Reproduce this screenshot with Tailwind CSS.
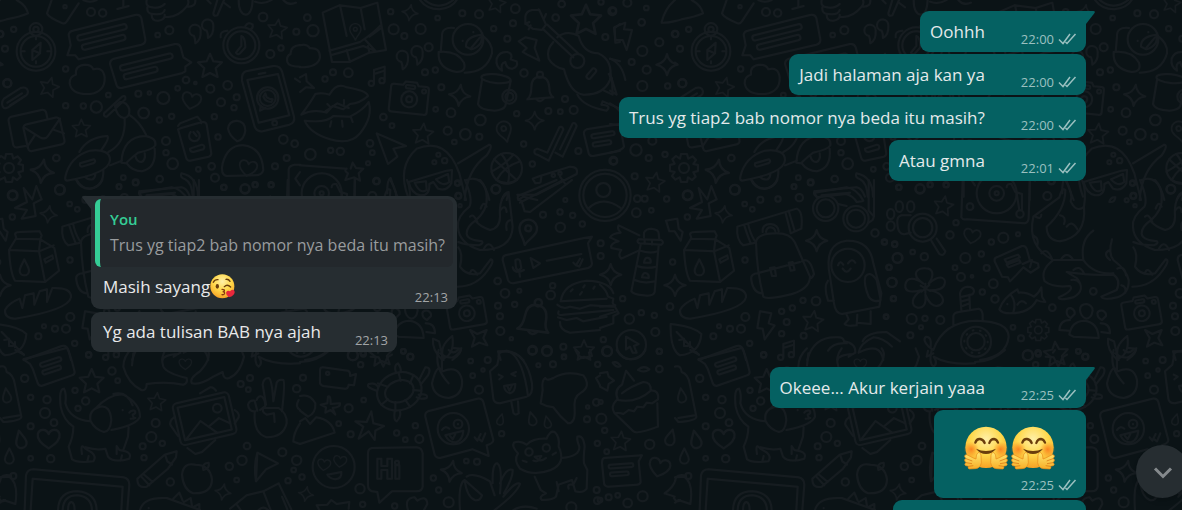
<!DOCTYPE html>
<html lang="id">
<head>
<meta charset="utf-8">
<meta name="viewport" content="width=device-width, initial-scale=1">
<title>Chat</title>
<script src="https://cdn.jsdelivr.net/npm/@tailwindcss/browser@4"></script>
</head>
<body class="bg-[#0b1316] font-['Open_Sans','Noto_Sans',sans-serif]">
<main class="relative isolate h-screen overflow-hidden">

<!-- Wallpaper: a doodle tile that repeats every 675px -->
<svg class="absolute inset-0 -z-10 size-full" aria-hidden="true">
<defs>
<path id="spark" d="M0-32Q5-6 32 0Q6 5 0 32Q-5 6-32 0Q-6-5 0-32Z"/>
<path id="star" d="M0-35L10-12L36-9L17 9L23 35L0 23L-23 35L-17 9L-36-9L-10-12Z"/>
<path id="heart" d="M0 28C-22 14-34 2-31-13C-27-29-6-29 0-13C6-29 27-29 31-13C34 2 22 14 0 28Z"/>
<path id="drop" d="M0-24C6-10 14 0 14 10A14 14 0 0 1-14 10C-14 0-6-10 0-24Z"/>
<path id="quote" d="M14 30Q32 20 30-8A17 17 0 1 0 10 8Q14 16 14 30Z"/>
<g id="bell"><path d="M-38 30Q-26 20-26-5Q-26-38 0-38Q26-38 28-5Q28 16 40 24Z"/><circle cy="-44" r="9"/><path d="M-10 30Q0 42 12 28"/></g>
<g id="camera"><path d="M-50-38L-22-38L-16-48L18-48L24-38L48-38Q56-38 56-28L56 38Q56 46 46 46L-48 46Q-58 46-58 38L-58-30Q-58-38-50-38Z"/><circle r="24" cy="4"/><circle r="9" cy="4"/><circle cx="42" cy="-24" r="6"/><rect x="-14" y="-38" width="28" height="10" rx="4"/></g>
<g id="gear"><path d="M-9-42H9L13-28L26-35L36-24L28-12L42-9V9L28 13L35 26L24 36L12 28L9 42H-9L-13 28L-26 35L-36 24L-28 12L-42 9V-9L-28-13L-35-26L-24-36L-12-28Z"/><circle r="15"/></g>
<g id="note"><path d="M-10 20V-18L22-28V10M-10-6L22-16"/><circle cx="-18" cy="22" r="8"/><circle cx="14" cy="14" r="8"/></g>
<g id="pin"><path d="M0 34C-8 14-24 6-24-12A24 24 0 0 1 24-12C24 6 8 14 0 34Z"/><circle cy="-12" r="8"/></g>

<g id="doodles" fill="none" stroke="#161c20" stroke-width="6" stroke-linejoin="round" stroke-linecap="round">
<g transform="scale(.33333)" data-dots="195,20,5 273,36,12 308,39,11 41,88,8 15,146,9 0,102,10 22,250,12 473,105,7 508,91,12 197,207,8 197,317,8 250,318,8 289,321,17 325,285,7 415,281,9 448,279,5 490,294,18 431,339,16 478,360,8 515,349,8 533,265,7 558,240,10 586,249,4 631,266,12 683,256,13 710,292,9 663,307,12 702,323,8 643,350,8 654,411,8 498,423,12 498,458,8 518,491,16 479,537,10 407,547,9 370,533,7 357,560,7 169,474,10 180,569,15 38,586,15 595,508,7 635,499,10 645,533,12 672,562,8 735,567,14 766,554,7 814,555,7 825,499,9 860,474,9 850,418,13 884,431,10 789,51,13 811,162,12 843,144,8 889,95,9">
<path d="M-40 66Q-30 25 0 0M50 0Q78 15 84 40Q60 50 20 58Q-20 70-40 68"/>
<path d="M155 0L141 40Q145 52 188 70Q196 72 202 62L236 10M250 0Q270 10 290 0M370-5V20M352 27L386 18"/>
<path d="M440 0Q436 20 455 22Q480 26 494 12M442 22Q440 42 460 42Q490 46 494 30M455 44Q455 64 475 62Q496 58 494 44M494 50Q530 56 560 20Q568 10 564 0M564 20Q588 20 586 0M622 0L632 10M652 0L640 40Q640 50 652 46L672 0M672 8L690 22M716 0Q716 42 738 44Q756 42 758 0M765 5Q790 15 815 0M850 0Q865 18 888 8"/>
<circle cx="108" cy="154" r="58"/><circle cx="108" cy="154" r="46"/><circle cx="108" cy="88" r="19"/><circle cx="108" cy="88" r="8"/><path d="M122 128L97 150V180L120 160ZM97 150L120 160M108 112V118M108 190V184M66 154H74M150 154H142"/>
<path d="M218 92L405 45Q420 42 424 54L436 118Q438 130 424 134L236 178L226 166L202 166L212 136L206 104Q208 94 218 92Z"/>
<rect x="230" y="89" width="152" height="16" rx="8" transform="rotate(-14 306 97)"/><rect x="244" y="119" width="134" height="16" rx="8" transform="rotate(-14 311 127)"/>
<path d="M342 176L525 132Q538 130 542 142L550 172L574 187L556 200V214L545 220L365 264Q354 266 350 256L330 192Q330 180 342 176Z"/>
<rect x="358" y="178" width="162" height="16" rx="8" transform="rotate(-14 439 186)"/><rect x="370" y="211" width="104" height="16" rx="8" transform="rotate(-14 422 219)"/>
<path d="M228 224Q224 196 255 194Q275 194 280 208Q310 200 314 232Q316 275 270 282Q215 285 209 250Q208 230 228 224Z"/>
<use href="#quote" x="572" y="100"/><use href="#quote" x="610" y="84"/>
<circle cx="724" cy="136" r="54"/><circle cx="724" cy="136" r="42"/><path d="M724 108V138L708 158Q714 168 722 158L736 142Q736 112 724 108ZM662 112Q658 94 682 92M736 78Q745 64 758 74Q760 84 752 88"/>
<use href="#star" transform="translate(832 86) rotate(8) scale(.8)"/>
<use href="#star" x="630" y="196"/><use href="#star" transform="translate(148 260) rotate(15) scale(.8)"/><use href="#star" transform="translate(244 384) scale(.75)"/>
<path d="M900 135Q870 138 872 162Q858 168 862 186Q866 200 900 200M885 236L900 246M0 188L6 192"/>
<use href="#heart" transform="translate(574 302) rotate(12) scale(.9)"/>
<path d="M12 296L62 264Q80 258 84 274Q84 284 76 288L24 322Q8 330 6 312Q6 302 12 296M22 308L66 280M30 316L74 288"/>
<path d="M142 354L138 336Q134 328 124 330L34 350Q24 354 26 364L40 436Q44 444 54 442L76 438"/>
<rect x="76" y="362" width="112" height="82" rx="10" transform="rotate(-13 132 403)"/><path d="M72 382L120 412Q136 420 144 408L180 356M82 440L106 404M192 400L158 388"/>
<use href="#gear" x="27" y="504"/><use href="#spark" transform="translate(127 514) rotate(8) scale(1.1)"/>
<path d="M312 340L366 290Q378 284 376 298L320 350Q310 350 312 340M345 318Q350 350 372 354Q390 352 388 328Q380 304 360 306ZM374 356Q378 430 325 456M390 346Q420 366 438 404M238 456Q262 412 322 408Q330 414 304 450M196 530Q210 470 270 452Q330 446 330 480Q328 520 200 542Q194 540 196 530ZM330 496L366 482M364 488Q368 410 436 408Q470 414 466 436Q460 448 414 458Q386 480 378 490ZM228 538Q238 566 270 566Q312 560 310 510M256 530Q262 540 278 538Q286 532 286 522M380 490Q398 514 426 514Q470 504 464 446M406 468Q410 486 424 486Q438 480 434 460M240 490L282 478Q290 484 280 490L246 500Q238 500 240 490"/>
<path d="M534 378L540 370L592 350L602 362L604 370M544 384L606 366Q618 364 620 374L634 460Q634 468 626 470L570 482Q560 482 558 472L534 388ZM570 446L606 434Q618 438 610 448L580 456Q570 456 570 446M572 396A16 16 0 1 0 592 394M580 396L590 408"/>
<path d="M738 214L820 198Q840 196 846 214L882 350Q886 368 868 374L788 394Q770 396 764 380L726 242Q724 218 738 214ZM742 240L834 222L868 346L776 368ZM776 222L796 218"/><circle cx="803" cy="294" r="32"/><path d="M782 318L780 332L796 324M790 290Q796 306 814 306L818 298L808 296L800 292L796 280Z"/><circle cx="824" cy="369" r="7"/><circle cx="803" cy="294" r="24"/>
<path d="M710 362Q736 364 736 392Q732 420 712 424Q688 408 684 386Q686 364 710 362M680 528Q660 524 668 490Q684 434 730 436Q786 442 790 510Q786 526 765 526L680 528"/><use href="#heart" transform="translate(744 504) rotate(10) scale(.85)"/>
<path d="M418 574L545 562Q560 564 570 590M440 586L525 578M544 520Q594 530 594 590M544 520Q538 532 556 538Q576 548 578 590M418 574Q414 584 426 590M866 590V508Q868 496 884 494H900M900 516L886 536L900 556"/>
</g>

<g transform="translate(300 0) scale(.33333)" data-dots="22,53,10 39,92,17 272,35,8 281,88,15 313,108,9 362,87,15 386,142,12 413,54,7 487,40,9 537,43,12 581,86,8 646,26,13 639,70,9 622,116,9 785,12,10 767,53,10 903,6,8 937,34,12 916,111,9 99,217,9 75,237,8 145,218,13 375,217,9 406,210,8 424,262,9 407,328,7 453,338,13 250,351,10 276,377,7 443,392,12 463,426,7 496,403,16 538,410,9 541,360,16 650,341,8 745,333,9 781,335,7 821,330,12 795,297,9 672,219,11 671,432,8 835,453,9 697,492,8 940,482,12 31,463,16 92,451,8 121,454,11 210,430,10 217,458,7 204,490,6 229,543,10 415,464,6 434,482,8 403,487,6 587,568,13 473,549,8">
<path d="M68 38L118 16L182 24L232 8L258 150L208 158L148 186L96 186ZM120 16L140 108M182 24L194 88M140 150L150 186M204 138L208 156M88 152L180 126Q220 100 244 74M92 166L190 138L224 152M196 120L226 152M208 110L244 84"/><use href="#pin" transform="translate(166 96) scale(.7)"/>
<use href="#spark" transform="translate(330 38) rotate(8) scale(.75)"/>
<path d="M360 0Q380 28 418 28Q456 24 470 0M374 0Q415 34 460 0M0 136Q20 130 30 145Q60 142 60 172Q55 202 0 202"/>
<use href="#quote" x="294" y="178"/><use href="#quote" x="338" y="164"/><use href="#note" x="232" y="228"/>
<circle cx="504" cy="118" r="46"/><path d="M462 84Q424 80 426 110L422 156M546 106Q580 130 576 160Q560 218 494 218M416 156Q412 206 470 216Q500 216 492 188Q470 150 416 156M498 140Q496 110 544 104Q552 136 514 148ZM512 146L540 112"/><path d="M488 122V123M520 96V97"/>
<path d="M590 176Q598 154 622 156Q640 160 632 178L650 184Q656 200 638 206Q620 208 616 186Q600 190 606 212Q586 200 590 176"/>
<use href="#star" transform="translate(590 8) rotate(12) scale(.75)"/>
<path d="M656 124L676 112L710 120L704 144L718 182L682 164L668 156L680 144Z"/>
<path d="M676 50Q678 34 696 30L718 30L738 74L726 90L698 86L676 70ZM716 28L724 42M738 42L732 56M686 88L692 76M676 72L688 66M728 86L820 172M742 74L834 160M760 126Q738 150 746 176Q760 200 792 208Q810 280 850 284Q910 286 930 240Q940 180 895 160Q850 160 836 108Q800 88 772 112"/><circle cx="832" cy="183" r="21"/><rect x="856" y="214" width="36" height="14" rx="6" transform="rotate(-50 874 221)"/><path d="M930 176L960 184M926 222L936 236L938 284L912 272M832 284Q850 320 920 332Q936 316 904 314L908 304L960 326"/>
<use href="#star" transform="translate(858 58) scale(1.25)"/><path d="M960 72L944 84L946 128L960 126"/>
<path d="M0 232L18 222L20 244L42 264L18 262L0 276"/>
<path d="M4 344Q30 310 46 282Q66 276 88 284Q110 246 140 262Q200 272 204 288Q180 310 150 312L130 328L98 318L80 338Q40 326 4 344M76 334L112 310L146 324M14 362Q80 370 100 348L150 350Q190 330 206 306Q220 350 180 400Q150 436 90 418Q30 400 14 362M90 380L94 364M128 380L126 362M158 366L152 350M82 312L90 320M132 300V312"/>
<use href="#camera" transform="translate(328 294) rotate(6)"/><use href="#spark" transform="translate(479 286) rotate(6)"/>
<ellipse cx="588" cy="236" rx="44" ry="13" transform="rotate(6 588 236)"/><path d="M546 240L534 312Q540 330 584 332Q610 330 616 318L632 244"/><circle cx="628" cy="290" r="21"/><circle cx="628" cy="290" r="12"/>
<use href="#bell" x="720" y="268"/><use href="#spark" transform="translate(704 362) scale(.85)"/><use href="#pin" transform="translate(614 396) rotate(-15) scale(.9)"/><use href="#star" transform="translate(369 400) rotate(5) scale(.85)"/>
<path d="M230 400L318 438L280 446L292 470L264 492Z"/>
<path d="M704 450Q700 462 712 464L746 482L790 388Q786 376 778 382L742 458L712 446ZM766 458L788 470L830 378Q826 366 818 370L780 448"/>
<path d="M960 372L860 388Q850 392 852 402L866 460Q870 470 880 468L960 452"/><rect x="874" y="398" width="70" height="12" rx="6" transform="rotate(-9 909 404)"/><rect x="878" y="424" width="56" height="12" rx="6" transform="rotate(-9 906 430)"/>
<path d="M324 590Q290 500 350 446Q440 410 478 520L498 600M474 490L568 434Q580 436 560 466Q500 510 494 600M500 540Q550 520 568 600M326 546L440 512L456 510L454 550Q440 576 414 566L400 546L388 552Q390 588 360 586Q334 580 326 546M344 548L378 544L380 570Q360 584 344 548M408 538L444 522L448 546Q430 562 408 538"/>
<circle cx="620" cy="505" r="46"/><path d="M582 478L650 540M604 462Q636 500 624 550M660 484Q610 500 590 540M575 515Q620 490 640 464"/>
<path d="M652 584L710 584L830 522Q836 500 810 500L720 528L698 536L706 550L720 548M780 530L796 552M655 600L670 590L712 600M724 530L722 546"/><circle cx="760" cy="526" r="5"/><circle cx="780" cy="520" r="5"/>
<path d="M0 496L140 506M164 536V600M140 506Q130 512 144 520L136 540L162 532L180 542L176 520L190 506L168 504L158 488L152 506M262 580Q260 540 272 534Q280 560 296 600M605 600Q612 578 626 576L620 600"/>
<circle cx="915" cy="586" r="77"/><circle cx="915" cy="586" r="65"/><circle cx="910" cy="570" r="21"/><path d="M864 626Q908 584 962 624"/>
</g>

<g transform="translate(610 0) scale(.33333)" data-dots="52,8,12 9,32,9 109,24,7 95,67,10 97,153,15 148,127,12 196,102,9 65,186,9 110,209,12 97,258,15 173,258,8 217,250,12 127,422,12 78,450,17 116,474,9 11,483,10 165,463,8 74,529,9 82,596,10">
<path d="M12 82L46 68L42 88L66 90L50 150L38 120L16 120Z"/><use href="#spark" x="171" y="194"/>
<path d="M0 176Q36 190 46 240M0 220L20 284L0 272M0 310Q20 320 34 340M0 372L30 376L42 440Q38 452 0 458"/><use href="#star" transform="translate(135 545) rotate(10) scale(.8)"/>
</g>

<g transform="translate(600 180) scale(.33333)" data-dots="134,56,9 200,57,8 109,98,13 154,91,7 263,46,13 262,111,8 404,29,14 434,72,7 457,88,7 481,59,9 534,57,8 598,53,11 582,20,7 632,8,8 2,190,9 2,228,9 218,246,8 435,240,8 210,380,10 68,356,8 88,417,14 124,398,8 163,406,8 166,456,12 178,514,8 10,479,8 21,514,15 340,469,9 357,439,6 390,446,9 423,446,12 436,411,12 449,490,8 491,524,8 545,394,8 577,384,8 560,426,9 545,461,8 609,361,8 648,363,13 611,467,9 825,159,11 853,186,8 884,192,8 892,234,14 867,262,8 876,307,14 880,356,8 859,410,6">
<path d="M296 24L322 58L334 18L350 58L326 70L332 108L290 116L306 90L270 84L306 66Z"/>
<use href="#spark" transform="translate(371 103) rotate(8) scale(.8)"/><path d="M455 0Q470 26 494 26Q520 24 532 0"/>
<path d="M132 172V158Q138 146 154 146Q176 148 176 160L178 178M116 178L184 180Q194 188 184 194L118 190Q108 184 116 178M134 178V192M156 180V194M122 194L94 334Q100 344 130 346Q160 350 164 336L176 196M120 212Q150 222 172 214M110 258Q140 268 168 260M104 300Q130 312 166 304M132 248Q134 230 146 234Q154 238 152 248ZM126 292Q128 276 140 280Q148 284 146 294Z"/>
<path d="M118 166L56 136Q50 146 62 158Q36 160 30 172L56 184Q30 190 34 204L64 210Q52 226 64 236L116 212"/>
<path d="M198 122L232 116L236 146L248 156L242 182L224 154L208 154Z"/>
<use href="#spark" transform="translate(32 284)"/><use href="#spark" x="225" y="316"/><use href="#spark" x="650" y="182"/>
<path d="M252 210L274 174L270 162Q272 156 284 156L344 154L350 166L346 178L388 204L402 272L360 306L270 302Q256 280 252 210L342 214L360 304M274 176L346 178L342 214L386 196M358 238L382 226L384 236L362 248Z"/><use href="#drop" x="298" y="262"/>
<path d="M240 390Q250 370 284 356L292 384L300 346L326 340L328 374L344 334L366 328L366 366L382 324Q440 322 438 352Q430 390 270 416Q238 414 240 390"/>
<path d="M412 140L590 86Q610 94 604 146L572 160M412 140Q408 180 430 196L466 188M432 134Q440 160 452 190M444 130Q450 160 464 182M556 96L572 158M566 92L584 152M468 186Q472 160 530 160Q570 160 584 186L630 290Q630 330 560 346Q500 360 490 350Q470 270 468 186M472 280L600 246M488 156Q486 132 512 132Q534 134 536 154M498 156Q500 142 512 142Q524 144 526 154M606 244Q630 230 642 282Q636 296 630 294M476 280Q450 280 454 300Q460 340 488 340M510 264L524 262L528 288L516 288ZM566 248L578 246L584 270L572 272Z"/>
<circle cx="677" cy="85" r="38"/><circle cx="677" cy="85" r="27"/><circle cx="768" cy="116" r="38"/><circle cx="768" cy="116" r="27"/><path d="M644 38L740 22Q770 26 790 62M644 38L650 52L738 42Q760 48 770 66L786 64M714 72L740 78M806 0V92L822 110L818 120L806 128M822 110V0"/>
<circle cx="744" cy="256" r="50"/><path d="M690 290Q670 190 740 182Q810 180 820 250L844 340L838 380L726 402Q706 400 702 370ZM714 256Q720 238 730 254M744 250Q756 232 766 248M728 266Q740 284 752 266M684 302Q670 320 684 362L702 362M796 290Q810 270 830 300L842 360Q820 370 806 350Q790 310 796 290M740 404L746 418L734 432Q740 440 770 436L772 404M772 428L812 432L812 394"/>
<path d="M212 432Q280 438 304 462Q300 520 240 526Q210 510 212 432M230 456L296 524M252 476V494M238 480L250 478M270 486V502M252 498H264"/>
<circle cx="94" cy="494" r="44"/><path d="M78 470L116 492L102 498L110 518L98 518L90 500L78 508Z"/>
<path d="M480 394L514 400L506 430L524 436L494 478L488 446L472 444Z"/><use href="#star" transform="translate(639 422) rotate(8) scale(.85)"/><use href="#note" x="560" y="510"/>
<path d="M0 314Q20 330 24 350L40 356L38 368L56 400L40 408V430L0 444M0 380L46 376M0 410L50 394"/>
<path d="M296 540L410 498Q424 494 430 510L438 540"/>
<path d="M622 540Q640 470 710 472Q730 470 732 484Q768 490 766 518L746 530M684 512Q700 486 740 490M788 484Q800 456 860 456L900 484M776 518Q780 490 820 472Q850 474 876 500M776 518Q840 484 850 540M712 540Q716 524 760 522"/>
</g>

<g transform="translate(880 180) scale(.33333)" data-dots="56,22,8 120,26,13 150,14,8 198,14,8 228,128,8 210,165,11 270,80,10 370,173,15 414,163,6 334,186,8 304,222,8 14,186,7 44,193,8 53,234,15 98,216,7 133,230,11 27,262,8 256,234,15 225,263,7 243,291,12 276,289,4 320,264,9 340,311,13 36,307,14 307,336,8 345,357,11 41,356,7 18,410,7 95,417,15 135,415,8 181,420,12 123,442,6 91,466,9 399,442,7 423,475,9 443,526,15 474,518,8 517,383,10 502,48,12 515,4,9 640,334,10 757,10,7 760,47,9 740,61,6 765,77,5 595,514,7 616,530,9">
<path d="M248 0L244 112Q248 120 260 118L434 130Q446 128 446 112L450 0M380 22Q380 10 394 12L406 36L426 42V90M410 40L418 90"/><circle cx="350" cy="40" r="22"/><circle cx="350" cy="40" r="6"/><circle cx="350" cy="40" r="60"/><circle cx="420" cy="102" r="11"/>
<use href="#star" transform="translate(191 76) rotate(10) scale(.8)"/>
<circle cx="128" cy="143" r="42"/><circle cx="128" cy="143" r="29"/><path d="M154 182L178 222Q192 230 196 214L170 176M92 106H64Q50 110 52 130Q54 166 76 162L92 158"/><ellipse cx="32" cy="102" rx="11" ry="15"/><ellipse cx="58" cy="80" rx="11" ry="16"/><ellipse cx="92" cy="80" rx="11" ry="16"/><ellipse cx="32" cy="138" rx="12" ry="14"/>
<use href="#heart" transform="translate(276 168) rotate(10) scale(.8)"/>
<path d="M350 232L426 198Q436 196 440 206L450 242L474 250L476 262L452 278L430 262L410 284L390 304L384 292L366 290L344 244Q342 234 350 232M428 252L456 240L450 262M374 238L414 224L420 232L380 248ZM380 254L418 240L422 248L386 262Z"/>
<g transform="translate(136 325)"><path d="M-6-14C-50-45-20-62 0-60C24-60 28-40 10-14C50-48 62-26 58-14C56 4 34 6 14 6C56 14 60 40 44 50C24 60 8 40 0 18C4 50-8 60-22 58C-46 52-42 26-12 6C-44 14-62 10-60-10C-56-36-30-32-6-14ZM-14-8L14 8M-12 10L12-10M0-14V14"/></g>
<path d="M220 436V408Q222 398 236 396L296 386Q306 388 308 404V424M244 390L240 340Q244 322 262 320Q282 320 282 334Q280 346 268 344L270 386M246 350L266 346M246 364L268 358M248 378L268 370M160 510Q190 424 290 422Q386 424 386 470Q380 530 300 540M160 510L146 500Q126 480 138 470Q156 470 152 500M160 520L140 530L144 512"/><circle cx="288" cy="485" r="45"/><circle cx="288" cy="485" r="26"/><circle cx="288" cy="485" r="35" stroke-dasharray="2 20"/>
<path d="M358 388Q370 352 412 328L416 338Q440 336 462 350Q476 340 484 322L486 350L496 366Q480 366 470 360Q450 400 390 400Q366 400 358 388M392 344Q410 366 400 398M412 374Q424 356 438 370M382 372V373"/>
<use href="#gear" transform="translate(475 450) scale(.75)"/><use href="#star" transform="translate(528 520) rotate(-5)"/>
<path d="M556 0Q580 40 572 64Q590 100 612 80Q620 30 606 0M556 30Q546 20 538 52Q500 80 460 110Q440 200 520 240H610M556 30Q556 90 500 140Q500 180 540 184Q620 170 612 80M540 106Q560 110 552 132M560 140Q576 118 592 148M466 110Q484 120 484 104M460 166Q478 176 472 196M484 220Q500 200 516 236M542 240Q560 210 580 240M640 152Q600 180 610 240Q640 284 700 280M520 240Q480 270 494 304Q520 324 570 318Q584 330 536 352Q536 364 580 352Q620 330 590 294L560 276M560 276Q640 288 700 284Q724 300 710 330L664 350Q670 362 712 352Q748 340 746 300Q740 270 700 240Q684 220 696 178M580 270Q600 254 612 280M690 210Q666 220 690 240M712 266Q734 256 738 286M724 316Q740 320 736 338M574 300Q590 296 600 310"/>
<path d="M688 66Q692 50 706 52Q704 68 688 66"/>
<path d="M600 390Q600 372 620 372Q638 376 638 392Q634 416 618 416Q602 410 600 390M560 396Q560 384 572 384Q586 390 584 402L572 414Q560 408 560 396M652 400Q654 390 668 392Q680 398 678 408L666 420Q652 414 652 400M568 464Q574 424 612 422Q654 426 656 474L580 470ZM538 450Q540 420 570 420M538 450L566 452M662 430Q690 430 690 460L664 456"/>
<path d="M712 540Q680 510 684 476L702 484M702 484Q710 520 716 540M742 468Q700 500 716 536Q750 520 742 468M746 504L768 506Q770 520 742 540"/>
</g>

<g transform="translate(280 180) scale(.33333)" data-dots="535,48,8 648,27,13 789,104,9 840,96,8 841,142,14 856,60,6 878,106,8 907,132,8 653,303,10 675,340,13 718,332,6 818,317,8 812,345,13 654,377,9 704,373,8 660,409,9 661,453,12 694,476,5 757,512,12 801,512,15 850,500,9 852,530,7">
<path d="M555 0Q580 60 568 80Q530 110 534 140Q536 190 600 210Q696 210 698 140Q690 70 686 40Q656 50 660 110Q660 144 630 150Q600 140 586 122Q624 90 620 50Q620 20 600 0M586 122Q560 140 560 160Q560 180 606 184Q612 190 596 196Q560 196 535 186M570 110Q580 98 592 126M602 86Q610 60 620 80M660 92Q676 70 680 96M696 120Q674 120 680 150M610 210Q626 176 642 210M535 202Q550 220 540 260Q560 290 600 280L632 238Q646 240 624 270Q590 320 532 320M570 280Q576 258 592 284"/>
<path d="M650 0Q680 18 710 0M714 48L830 0M714 48Q710 60 724 62L734 94L750 96L876 0M720 68L850 0"/>
<use href="#pin" transform="translate(742 158) rotate(12) scale(1.1)"/>
<path d="M676 226L912 174L936 170L924 190L936 250Q936 260 924 264L700 310Q688 310 684 300L668 240Q668 228 676 226M706 240Q716 234 720 242L724 264Q714 276 708 264ZM698 262Q704 284 732 270M718 278L720 290M752 234L780 250L760 264ZM800 242L904 222M880 248L888 256L900 236M890 256L898 260L908 238"/>
<use href="#camera" transform="translate(560 396) rotate(-10) scale(.98)"/><use href="#bell" transform="translate(764 420) rotate(12) scale(1.2)"/>
<path d="M570 450L592 462L620 450L610 474L622 496L598 488L576 500L584 474Z"/>
<path d="M842 364Q850 310 920 302Q990 304 1000 340M842 364L980 356M832 374Q850 390 870 380L900 386L930 376L1000 380M836 394Q830 408 850 404L1000 390M834 412L860 420L890 414L910 424L980 410M840 426Q838 450 870 458L960 450M872 334L878 328M910 322L914 316M900 344L906 336M940 326L944 320"/>
<use href="#star" transform="translate(912 510) scale(.85)"/><path d="M654 514Q710 512 730 540M654 514L662 540"/>
</g>

<g transform="translate(0 350) scale(.33333)" data-dots="266,15,8 74,85,11 92,142,8 141,149,11 135,189,15 162,218,10 92,229,9 92,325,7 152,326,11 225,121,8 257,153,11 234,175,8 336,63,11 353,92,7 467,219,12 454,261,15 487,280,8 428,289,9 432,323,8 511,396,11 722,102,9 750,84,9 745,119,7 741,288,10 726,331,14 688,349,11 710,390,7 847,307,12 890,116,11 890,331,14 881,360,7 864,392,8">
<path d="M46 0L72 14M0 50Q18 44 20 66Q40 74 44 100L64 200Q64 212 10 216L0 204M10 204L60 196"/><use href="#drop" transform="translate(20 136) rotate(-8) scale(.9)"/>
<path d="M70 28L200 -6Q208 0 224 66Q224 74 216 76L124 108Q114 106 112 96L98 56L90 42Z"/><rect x="119" y="30" width="66" height="12" rx="6" transform="rotate(-18 152 36)"/><rect x="126" y="54" width="58" height="12" rx="6" transform="rotate(-18 155 60)"/>
<use href="#star" transform="translate(275 92)"/><use href="#star" transform="translate(470 154) rotate(5) scale(.75)"/>
<path d="M396 -5Q370 20 370 50Q384 100 424 120Q440 124 440 102Q500 94 550 104Q564 100 560 84Q500 70 490 50Q480 20 500-5M396 46L400 10M620 -5Q640 20 600 64Q566 86 576 100Q600 106 640 80L668 66Q670 90 688 84Q720 70 732 20L722-5"/><use href="#heart" transform="translate(556 42) scale(.6)"/>
<path d="M770 0Q760 40 776 50Q790 40 776 20Q820 46 900 40"/>
<path d="M192 116Q176 116 182 170Q190 210 220 230Q220 260 206 290L216 328Q230 340 280 334Q290 320 276 308L256 296Q240 276 246 312M192 116Q200 130 196 160Q210 210 272 214M256 292Q290 302 316 296L324 320Q340 340 388 326Q396 310 376 304L358 300L350 288V312M386 230L384 260L370 300M262 334L266 318M362 332L366 316M272 214Q264 180 300 170Q330 164 334 210Q330 246 312 246Q286 240 272 214M286 176Q330 130 370 134Q420 160 420 200Q410 226 334 240M340 132Q380 120 398 166M388 188Q392 180 404 182Q410 190 398 194L402 206M392 206L406 204M368 180V181"/>
<use href="#heart" transform="translate(146 266) scale(1.05)"/><use href="#drop" transform="translate(62 268) rotate(-12) scale(1.1)"/><use href="#drop" transform="translate(28 318) scale(.95)"/>
<g transform="rotate(-13 614 206)"><rect x="528" y="142" width="172" height="128" rx="14"/><rect x="542" y="156" width="144" height="100"/><circle cx="658" cy="184" r="13"/><path d="M546 254L600 210L640 254M620 232L656 214L684 236"/></g><path d="M600 130L630 112Q640 110 648 122M524 200Q506 214 512 226L534 258M704 180Q720 190 716 202L704 220M562 294L586 312L606 306L646 270"/>
<path d="M798 164L788 104Q790 84 806 84Q816 88 820 154L830 98Q836 86 850 90Q856 96 846 184M766 184Q746 186 744 164Q748 150 764 152L772 182M770 150Q774 136 786 140Q796 150 796 168L780 180M790 174Q784 186 800 194L822 190L824 216M790 174L836 174Q862 190 860 220Q850 262 800 262Q760 250 764 188"/>
<path d="M772 308L834 340L798 358L768 394ZM772 308Q760 350 768 394"/>
<path d="M412 386L494 314L530 304L528 322L504 356L440 410Q412 416 412 386M430 372L458 396M424 380L448 406M496 316L502 334L516 344"/>
<path d="M586 344Q550 336 546 374Q550 420 580 430Q636 432 636 388Q630 344 586 344M610 360Q604 340 626 338Q630 356 610 360"/>
<use href="#spark" transform="translate(669 426) rotate(10) scale(.75)"/>
<path d="M74 480L78 376Q82 358 100 358L370 382Q388 386 388 404L382 480M92 480L98 386L368 410L364 480"/><path d="M174 480Q176 424 232 424Q288 428 290 480M188 480Q190 436 232 436Q274 440 276 480M204 480Q204 458 214 456Q224 458 224 480"/>
<path d="M0 382L28 380Q56 400 46 462L10 450L0 458"/><circle cx="40" cy="378" r="9"/>
<path d="M420 480Q430 440 500 444L600 480M520 446L538 428L548 452M552 456L572 444L576 468M582 470L598 462V480M446 474V475M690 476L740 436L790 424L836 400L874 478M790 424L812 480M846 440L862 478M776 480Q790 466 804 480M722 480L712 466"/>
<path d="M900 220Q880 250 880 275L900 282M896 150Q884 170 900 180"/>
</g>

<g transform="translate(300 350) scale(.33333)" data-dots="9,83,9 182,44,8 159,16,15 190,12,8 331,20,9 310,4,7 146,175,12 191,150,7 116,221,7 152,253,9 346,227,8 290,249,8 316,269,7 358,267,12 512,33,7 563,30,9 549,60,5 518,77,7 537,119,12 605,251,8 499,333,7 531,335,9 400,384,8 416,420,8 446,457,15 180,416,14 188,463,8 284,468,8 6,381,8 715,46,6 759,43,9 698,0,13 741,4,14 792,22,6 893,43,8 889,157,10 863,171,5 861,208,9 892,280,8 890,420,9 814,472,15 892,452,10">
<path d="M68 52L144 62Q152 66 150 78L168 72L162 106L146 104Q144 118 134 116L70 108Q58 104 60 94L60 62Q60 52 68 52"/><circle cx="83" cy="70" r="5"/>
<path d="M212 20L236 22L250 50L262 22L276 14M240 0L234 8M0 36Q50 36 90 0"/>
<path d="M84 140Q92 134 92 162L120 160Q122 172 98 174L106 194L92 180L76 188L78 172L62 164L82 160Z"/>
<ellipse cx="298" cy="124" rx="68" ry="56" transform="rotate(-20 298 124)"/><ellipse cx="298" cy="124" rx="44" ry="32" transform="rotate(-20 298 124)"/><path d="M288 68Q280 46 294 40Q304 54 302 64M358 88L376 52Q396 52 384 76L362 104M230 122Q196 112 206 102Q226 96 234 110M284 184Q280 210 290 214Q304 200 300 182M356 134Q386 130 380 144Q360 150 350 142M234 100L262 110M296 70L302 92M340 76L330 100M362 122L340 120M244 164L264 148M286 184V156M330 170L316 150"/>
<path d="M416 0Q400 50 446 100M426 0V60Q410 40 396 100Q400 140 446 144Q490 136 486 90Q476 44 428 64M420 10Q440 26 460 22Q480 10 484-5M446 0Q460 14 474 0"/>
<path d="M596 24Q592 4 620 2Q680 10 696 100Q700 134 680 140L600 160Q582 160 580 146L570 64L592 44ZM630 6Q670 30 684 138M634 156L640 188Q646 198 656 190L654 154M596 74L608 80L598 88M648 66L634 72L646 78M612 108L646 102Q646 126 630 130Q614 126 612 108M622 108L628 122L636 106"/>
<path d="M736 84Q740 94 760 84Q800 60 850 76Q876 110 840 130Q820 140 824 180Q826 220 804 220Q780 200 760 172Q740 170 722 160L728 120Q724 90 736 84"/>
<path d="M384 184L532 146Q546 144 550 156L580 270Q580 280 560 286L566 318L518 298L420 324Q408 324 404 314L376 200Q374 188 384 184"/><circle cx="460" cy="236" r="47"/><circle cx="474" cy="222" r="13"/><path d="M426 240Q436 226 448 236M436 256L490 242Q488 270 470 276Q448 280 436 256M450 258L458 268L466 252M524 262L532 272L542 252M538 268L546 274L556 250M474 222V223"/>
<use href="#drop" transform="translate(602 208) rotate(15) scale(.7)"/><use href="#drop" transform="translate(696 206) rotate(-15) scale(.85)"/><use href="#drop" transform="translate(742 216) rotate(-12) scale(.75)"/>
<path d="M214 184L220 220L252 228L226 242L224 270L206 244L176 266L190 230L166 214L200 216Z"/>
<path d="M0 138Q30 130 46 160Q48 190 24 200L0 182M0 214L16 204L30 222L48 202Q96 210 104 248L0 282"/>
<circle cx="101" cy="351" r="63"/><use href="#heart" transform="translate(72 344) rotate(8) scale(.62)"/><use href="#heart" transform="translate(120 334) rotate(8) scale(.62)"/><path d="M82 374L124 366Q126 386 106 388Q88 386 82 374"/>
<path d="M216 294L350 292Q366 294 368 310V410Q366 424 350 424H276L238 458L232 426L216 424Q204 420 204 406V310Q204 296 216 294"/>
<path d="M232 326H244V348H262V326H276V386H262V360H244V386H232ZM286 346H298V386H286Z"/><circle cx="291" cy="338" r="6"/>
<use href="#spark" transform="translate(454 364) rotate(10)"/><use href="#spark" transform="translate(18 432) rotate(10) scale(.7)"/>
<path d="M50 466L82 464L94 450L110 462L148 456L146 476M50 466L58 480M324 480Q312 444 344 442L352 452Q380 434 382 462L372 480"/>
<path d="M480 480Q474 400 494 390L546 436Q540 454 524 450Q500 440 494 390M500 380Q520 366 570 394L584 436M578 400Q576 340 592 340Q608 350 600 430M600 400Q620 350 638 360Q640 380 612 430M610 440Q650 390 660 402Q650 430 584 480"/>
<path d="M642 278Q660 270 680 284Q700 264 740 266Q750 240 764 246Q780 260 776 290Q800 340 752 360Q700 380 660 356Q640 330 654 310Q634 290 642 278M704 320L724 318L716 330ZM700 332Q712 336 716 330Q726 334 738 324M668 332L680 336M758 314L768 308M784 324Q840 320 838 290Q830 270 832 260Q850 254 854 290Q850 320 852 340L862 360L860 416Q850 430 826 424L816 390L776 404L768 440Q760 450 726 450Q714 440 738 430L722 420L704 380M770 396L776 424M806 416Q800 400 820 404L830 384"/><circle cx="687" cy="306" r="11"/><circle cx="739" cy="294" r="11"/><path d="M640 480Q670 462 710 476M826 0L836 18L850 24L876 18L870 0M900 76L888 84L900 106"/>
</g>

<g transform="translate(600 350) scale(.33333)" data-dots="22,4,14 178,57,10 178,4,8 4,206,15 14,241,8 20,305,7 149,283,14 2,156,6 128,439,15 83,459,13 53,436,7 26,442,9 0,450,7">
<path d="M50 0Q66 28 92 28Q126 24 136 0M38 38Q50 32 62 48Q50 56 38 38M114 60Q130 44 148 58Q132 70 114 60"/>
<path d="M0 70L22 66L26 80L42 92L26 102L22 122L0 110"/>
<path d="M66 104L78 62L102 92M66 104Q40 120 54 150Q110 160 152 122Q154 96 130 96Q90 110 66 130M50 150Q30 170 44 190Q60 188 70 192L86 180L102 184L112 170L130 172L140 158L156 160L174 148Q178 120 152 122M44 190L100 244Q110 254 174 230L172 160"/>
<use href="#star" transform="translate(62 272) rotate(5) scale(.8)"/><use href="#drop" transform="translate(212 262) rotate(15)"/>
<path d="M12 324L126 316L116 334L122 396Q120 404 110 404L24 410Q12 408 12 398L6 340Q6 326 12 324"/><rect x="26" y="342" width="74" height="11" rx="5" transform="rotate(-4 63 348)"/><rect x="30" y="366" width="56" height="11" rx="5" transform="rotate(-4 58 372)"/>
<use href="#heart" transform="translate(178 352) rotate(14)"/><path d="M194 430Q224 410 228 382Q240 370 258 378M222 444Q230 460 240 450M194 430L224 440"/>
</g>
</g>

<pattern id="wallpaper" width="675" height="510" patternUnits="userSpaceOnUse">
<use href="#doodles" x="-675"/><use href="#doodles"/><use href="#doodles" x="675"/>
</pattern>

<symbol id="ticks" viewBox="0 0 19 13"><path d="M1 6.500L5 10.500L12 1M7.500 9L9 10.500L17.500 1" fill="none" stroke="#9bc0c0" stroke-width="1.500"/></symbol>
<symbol id="tail" viewBox="0 0 9 13"><path d="M0 0H7.500Q9.500 0 8.500 2L0 13Z" fill="currentColor"/></symbol>

<radialGradient id="skin" cx=".5" cy=".3" r=".75"><stop offset="0" stop-color="#fff0a8"/><stop offset=".5" stop-color="#ffd84a"/><stop offset="1" stop-color="#f5991f"/></radialGradient>
<radialGradient id="blush"><stop offset="0" stop-color="#f9761b" stop-opacity=".85"/><stop offset="1" stop-color="#f9861b" stop-opacity="0"/></radialGradient>
<linearGradient id="hand" x2="0" y2="1"><stop offset="0" stop-color="#ffe873"/><stop offset="1" stop-color="#f8ae26"/></linearGradient>
<symbol id="hug" viewBox="0 0 132 132">
<circle cx="66" cy="64" r="62" fill="url(#skin)"/>
<circle cx="22" cy="70" r="23" fill="url(#blush)"/><circle cx="110" cy="70" r="23" fill="url(#blush)"/>
<path d="M34 50Q38 38 48 39Q58 40 62 51M76 51Q80 39 90 39Q98 40 102 50" fill="none" stroke="#6b3e0c" stroke-width="7" stroke-linecap="round"/>
<path d="M36 68Q66 82 96 68Q84 84 66 84Q48 84 36 68Z" fill="#6b3e0c"/>
<g id="palm"><path d="M42 80Q50 78 51 89L52 110Q50 126 34 128L16 129Q9 127 14 121L5 119Q-1 115 6 110L3 106Q-1 100 6 98L2 92Q1 85 8 86L28 96L36 99Q36 84 42 80Z" fill="url(#hand)" stroke="#e88a18" stroke-width="2"/><path d="M6 98L25 105M6 110L24 113M14 121L28 119" stroke="#dc7d18" stroke-width="2.500" fill="none"/></g>
<use href="#palm" transform="translate(132 0) scale(-1 1)"/>
</symbol>
<symbol id="kiss" viewBox="0 0 75 75">
<circle cx="37" cy="37" r="36" fill="url(#skin)"/>
<ellipse cx="22" cy="37" rx="5" ry="7" fill="#6b3e0c"/><path d="M10 25Q14 16 24 17M48 16Q56 15 60 22M43 38Q52 29 62 39" fill="none" stroke="#6b3e0c" stroke-width="4" stroke-linecap="round"/>
<path d="M36 46Q45 46 43 51Q41 53 38 53Q46 54 43 60Q41 63 36 62" fill="none" stroke="#8a3c10" stroke-width="4" stroke-linecap="round"/>
<path d="M57 70Q46 62 49 54Q53 47 60 52Q65 44 72 49Q77 56 70 63Q65 68 57 70Z" fill="#e8283c"/>
</symbol>
</defs>
<rect width="100%" height="100%" fill="url(#wallpaper)"/>
</svg>

<ol class="flex flex-col gap-[2px] pt-[11px] pr-24 pl-[91px] text-[17px] leading-[25px] text-[#e4eaeb]">
  <li class="relative flex items-end justify-between gap-9 self-end rounded-[9px] rounded-tr-none bg-[#056162] pt-2 pr-[9px] pb-[5px] pl-[10px]">
    <svg class="absolute top-0 left-full h-[13px] w-[9px] text-[#056162]" aria-hidden="true"><use href="#tail"/></svg>
    <p class="mb-[3px]">Oohhh</p>
    <span class="flex items-center gap-1 text-[13px] leading-4 text-[#9bc0c0]"><time>22:00</time><svg class="h-[13px] w-[19px]" role="img" aria-label="Terkirim"><use href="#ticks"/></svg></span>
  </li>
  <li class="flex items-end justify-between gap-9 self-end rounded-[9px] bg-[#056162] pt-2 pr-[9px] pb-[5px] pl-[10px]">
    <p class="mb-[3px]">Jadi halaman aja kan ya</p>
    <span class="flex items-center gap-1 text-[13px] leading-4 text-[#9bc0c0]"><time>22:00</time><svg class="h-[13px] w-[19px]" role="img" aria-label="Terkirim"><use href="#ticks"/></svg></span>
  </li>
  <li class="flex items-end justify-between gap-9 self-end rounded-[9px] bg-[#056162] pt-2 pr-[9px] pb-[5px] pl-[10px]">
    <p class="mb-[3px]">Trus yg tiap2 bab nomor nya beda itu masih?</p>
    <span class="flex items-center gap-1 text-[13px] leading-4 text-[#9bc0c0]"><time>22:00</time><svg class="h-[13px] w-[19px]" role="img" aria-label="Terkirim"><use href="#ticks"/></svg></span>
  </li>
  <li class="flex items-end justify-between gap-9 self-end rounded-[9px] bg-[#056162] pt-2 pr-[9px] pb-[5px] pl-[10px]">
    <p class="mb-[3px]">Atau gmna</p>
    <span class="flex items-center gap-1 text-[13px] leading-4 text-[#9bc0c0]"><time>22:01</time><svg class="h-[13px] w-[19px]" role="img" aria-label="Terkirim"><use href="#ticks"/></svg></span>
  </li>

  <li class="relative mt-[13px] self-start rounded-[9px] rounded-tl-none bg-[#262d31] px-1 pt-[3px] pb-1 text-[#e8e9ea]">
    <svg class="absolute top-0 right-full h-[13px] w-[9px] -scale-x-100 text-[#262d31]" aria-hidden="true"><use href="#tail"/></svg>
    <blockquote class="overflow-hidden rounded-md border-l-5 border-[#35cd96] bg-[#23282c] pt-2 pr-2 pb-[9px] pl-[10px]">
      <cite class="block text-[15px] font-semibold text-[#35cd96] not-italic">You</cite>
      <p class="text-base leading-[26px] text-[#999c9e]">Trus yg tiap2 bab nomor nya beda itu masih?</p>
    </blockquote>
    <div class="flex items-end justify-between pt-[7px] pr-[5px] pl-2">
      <p class="mb-[6px] flex items-center">Masih sayang<svg class="size-[25px]" role="img" aria-label="😘"><use href="#kiss"/></svg></p>
      <time class="text-[13px] leading-4 text-[#a2a5a7]">22:13</time>
    </div>
  </li>
  <li class="mt-px flex items-end justify-between gap-[34px] self-start rounded-[9px] bg-[#262d31] pt-[7px] pr-[9px] pb-1 pl-3 text-[#e8e9ea]">
    <p class="mb-1">Yg ada tulisan BAB nya ajah</p>
    <time class="text-[13px] leading-4 text-[#a2a5a7]">22:13</time>
  </li>

  <li class="relative mt-[13px] flex items-end justify-between gap-9 self-end rounded-[9px] rounded-tr-none bg-[#056162] pt-2 pr-[9px] pb-[5px] pl-[10px]">
    <svg class="absolute top-0 left-full h-[13px] w-[9px] text-[#056162]" aria-hidden="true"><use href="#tail"/></svg>
    <p class="mb-[3px]">Okeee... Akur kerjain yaaa</p>
    <span class="flex items-center gap-1 text-[13px] leading-4 text-[#9bc0c0]"><time>22:25</time><svg class="h-[13px] w-[19px]" role="img" aria-label="Terkirim"><use href="#ticks"/></svg></span>
  </li>
  <li class="flex flex-col items-end self-end rounded-[9px] bg-[#056162] pt-4 pr-[9px] pb-[5px] pl-[30px]">
    <p class="mr-[22px] mb-[7px] flex gap-[3px]"><svg class="size-11" role="img" aria-label="🤗"><use href="#hug"/></svg><svg class="size-11" role="img" aria-label="🤗"><use href="#hug"/></svg></p>
    <span class="flex items-center gap-1 text-[13px] leading-4 text-[#9bc0c0]"><time>22:25</time><svg class="h-[13px] w-[19px]" role="img" aria-label="Terkirim"><use href="#ticks"/></svg></span>
  </li>
  <li class="min-h-[41px] min-w-[193px] self-end rounded-[9px] bg-[#056162]"></li>
</ol>

<button type="button" aria-label="Gulir ke bawah" class="absolute -right-[7px] bottom-3 grid size-[53px] place-items-center rounded-full bg-[#262d31] shadow-md">
  <svg class="size-6" viewBox="0 0 24 24" fill="none" stroke="#858a8d" stroke-width="3" aria-hidden="true"><path d="M4 8.500L12 16.500L20 8.500"/></svg>
</button>
</main>

<script>
// Scatter the small rings of the wallpaper: each entry is "x,y,radius".
for (const group of document.querySelectorAll('[data-dots]')) {
  for (const entry of group.dataset.dots.split(' ')) {
    const [x, y, r] = entry.split(',');
    const ring = document.createElementNS('http://www.w3.org/2000/svg', 'circle');
    ring.setAttribute('cx', x);
    ring.setAttribute('cy', y);
    ring.setAttribute('r', r);
    group.append(ring);
  }
}
</script>
</body>
</html>
